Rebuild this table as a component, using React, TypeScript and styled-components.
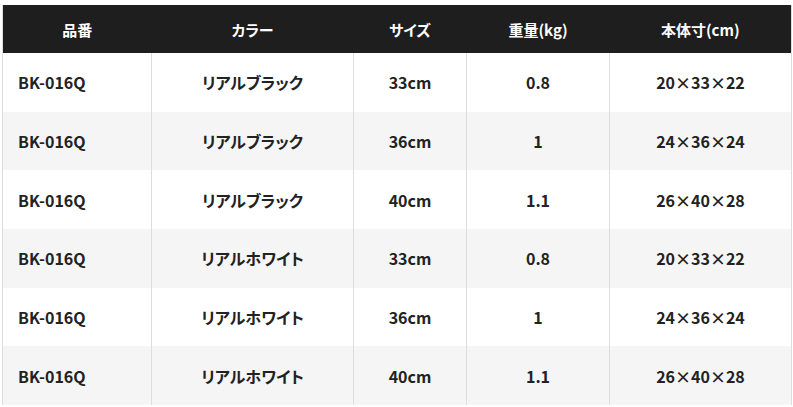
import React from "react";
import styled, { createGlobalStyle } from "styled-components";

const GlobalStyle = createGlobalStyle`
  body {
    margin: 0;
    background: #ffffff;
    font-family: "Noto Sans CJK JP", "Noto Sans", sans-serif;
    font-feature-settings: "palt";
  }
`;

const Wrapper = styled.div`
  padding: 5px 2px 0 2px;
`;

const SpecTable = styled.table`
  width: 789px;
  border-collapse: collapse;
  table-layout: fixed;
  border-left: 1px solid #dddddd;
  border-right: 1px solid #dddddd;
`;

const HeadCell = styled.th`
  height: 48px;
  padding: 0;
  background-color: #1e1e1e;
  color: #ffffff;
  font-size: 15px;
  font-weight: bold;
  text-align: center;
`;

const Row = styled.tr<{ $shaded: boolean }>`
  background-color: ${(p) => (p.$shaded ? "#f5f5f5" : "#ffffff")};
`;

const Cell = styled.td<{ $left?: boolean }>`
  height: 58.7px;
  padding: 0 0 0 ${(p) => (p.$left ? "15px" : "0")};
  border-left: 1px solid #dddddd;
  color: #222222;
  font-size: 16px;
  line-height: 20px;
  font-weight: bold;
  text-align: ${(p) => (p.$left ? "left" : "center")};
`;

const columns = [
  { label: "品番", width: 149 },
  { label: "カラー", width: 202 },
  { label: "サイズ", width: 113 },
  { label: "重量(kg)", width: 143 },
  { label: "本体寸(cm)", width: 182 },
];

const rows = [
  ["BK-016Q", "リアルブラック", "33cm", "0.8", "20×33×22"],
  ["BK-016Q", "リアルブラック", "36cm", "1", "24×36×24"],
  ["BK-016Q", "リアルブラック", "40cm", "1.1", "26×40×28"],
  ["BK-016Q", "リアルホワイト", "33cm", "0.8", "20×33×22"],
  ["BK-016Q", "リアルホワイト", "36cm", "1", "24×36×24"],
  ["BK-016Q", "リアルホワイト", "40cm", "1.1", "26×40×28"],
];

const App = () => {
  return (
    <Wrapper>
      <GlobalStyle />
      <SpecTable>
        <colgroup>
          {columns.map((c) => (
            <col key={c.label} style={{ width: c.width }} />
          ))}
        </colgroup>
        <thead>
          <tr>
            {columns.map((c) => (
              <HeadCell key={c.label}>{c.label}</HeadCell>
            ))}
          </tr>
        </thead>
        <tbody>
          {rows.map((row, i) => (
            <Row key={i} $shaded={i % 2 === 1}>
              {row.map((value, j) => (
                <Cell key={j} $left={j === 0}>
                  {value}
                </Cell>
              ))}
            </Row>
          ))}
        </tbody>
      </SpecTable>
    </Wrapper>
  );
};

export default App;
